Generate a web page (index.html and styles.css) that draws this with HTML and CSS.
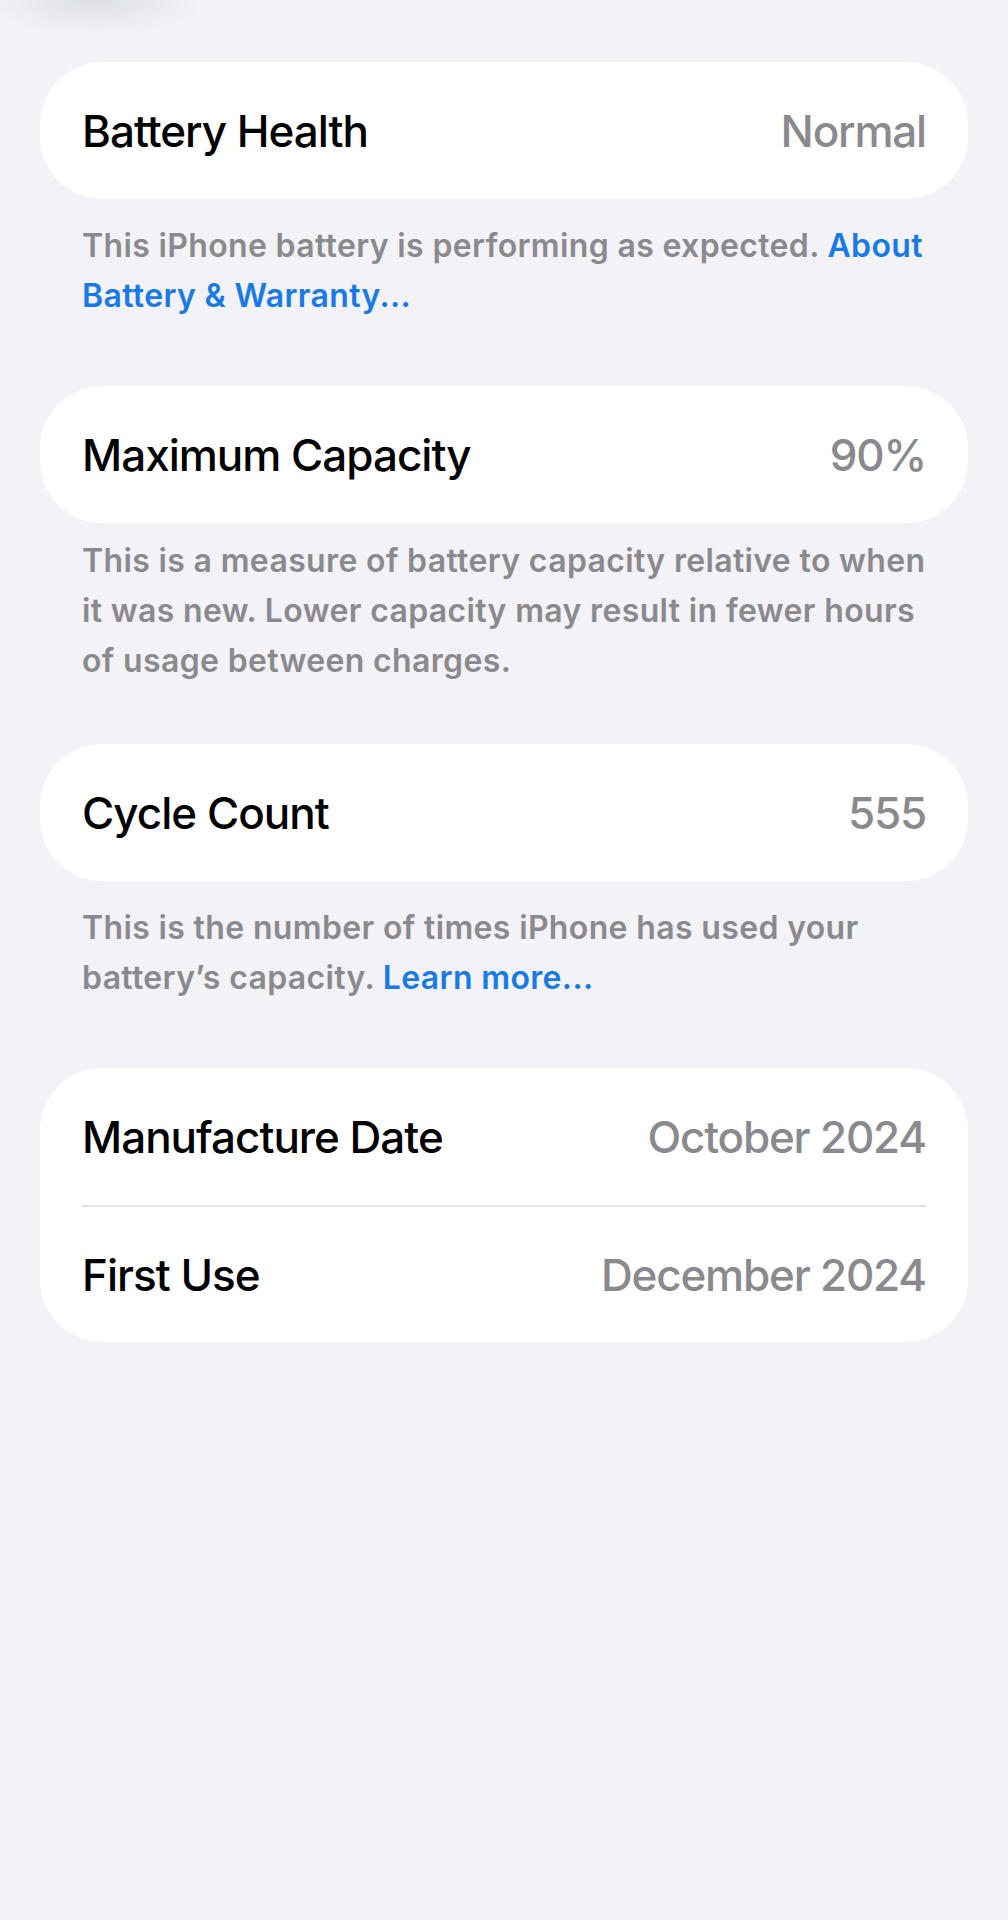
FILE: index.html
```html
<!DOCTYPE html>
<html lang="en">
<head>
  <meta charset="UTF-8" />
  <meta name="viewport" content="width=device-width, initial-scale=1.0"/>
  <title>Battery Health</title>
  <link rel="stylesheet" href="styles.css">
</head>
<body>
  <main class="page">
    <!-- 배터리 상태 -->
    <div class="group">
      <div class="row">
        <span class="label">Battery Health</span>
        <span class="value">Normal</span>
      </div>
    </div>
    <p class="note">This iPhone battery is performing as expected. <a href="#" class="link">About Battery &amp; Warranty...</a></p>

    <!-- 최대 용량 -->
    <div class="group">
      <div class="row">
        <span class="label">Maximum Capacity</span>
        <span class="value">90%</span>
      </div>
    </div>
    <p class="note compact">This is a measure of battery capacity relative to when it was new. Lower capacity may result in fewer hours of usage between charges.</p>

    <!-- 충전 횟수 -->
    <div class="group">
      <div class="row">
        <span class="label">Cycle Count</span>
        <span class="value">555</span>
      </div>
    </div>
    <p class="note">This is the number of times iPhone has used your battery’s capacity. <a href="#" class="link">Learn more...</a></p>

    <!-- 날짜 정보 -->
    <div class="group">
      <div class="row">
        <span class="label">Manufacture Date</span>
        <span class="value">October 2024</span>
      </div>
      <div class="row">
        <span class="label">First Use</span>
        <span class="value">December 2024</span>
      </div>
    </div>
  </main>
</body>
</html>
```

FILE: styles.css
```css
* {
  margin: 0;
  padding: 0;
  box-sizing: border-box;
}

body {
  background-color: #f2f2f7;
  background-image: radial-gradient(110px 36px at 95px 0, rgba(205, 205, 214, 0.55), rgba(242, 242, 247, 0));
  background-repeat: no-repeat;
  font-family: Inter, "Noto Sans", sans-serif;
  color: #000;
  min-height: 1920px;
}

.page {
  padding: 62px 40px 0 40px;
}

.group {
  background: #fff;
  border-radius: 62px;
  padding: 0 42px;
}

.row {
  display: flex;
  align-items: center;
  justify-content: space-between;
  height: 137px;
}

.row + .row {
  border-top: 2px solid #e3e3e8;
}

.label {
  font-size: 44px;
  font-weight: 500;
  letter-spacing: -1px;
}

.value {
  font-size: 44px;
  font-weight: 500;
  color: #8a8a8e;
  letter-spacing: -1.2px;
}

.note {
  font-size: 32px;
  font-weight: 600;
  line-height: 50px;
  letter-spacing: 0.35px;
  color: #8a8a8e;
  padding: 0 38px 0 42px;
  margin: 22px 0 65px 0;
}

.note.compact {
  margin: 13px 0 58px 0;
}

.link {
  color: #197ae6;
  text-decoration: none;
}
```
